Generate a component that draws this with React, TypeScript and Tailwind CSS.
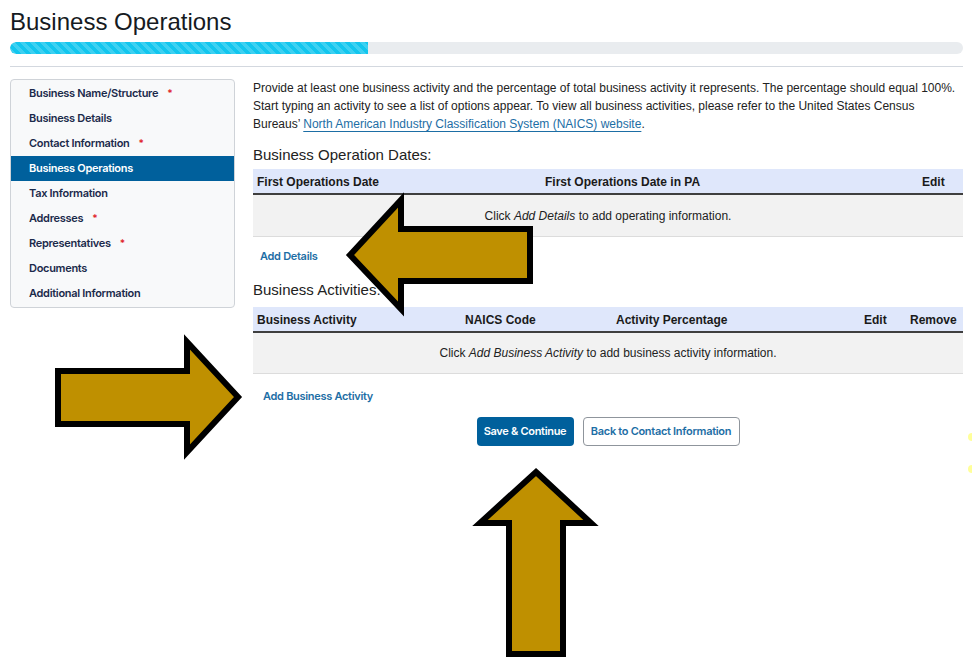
import React from 'react';

const navItems: { label: string; required?: boolean; active?: boolean }[] = [
  { label: 'Business Name/Structure', required: true },
  { label: 'Business Details' },
  { label: 'Contact Information', required: true },
  { label: 'Business Operations', active: true },
  { label: 'Tax Information' },
  { label: 'Addresses', required: true },
  { label: 'Representatives', required: true },
  { label: 'Documents' },
  { label: 'Additional Information' },
];

const Arrows = () => (
  <svg
    className="pointer-events-none absolute left-0 top-0 h-[657px] w-[972px]"
    viewBox="0 0 972 657"
    fill="#bf9000"
    stroke="#000"
    strokeWidth={6}
    strokeLinejoin="miter"
  >
    {/* left-pointing, next to Add Details */}
    <polygon points="350,255 401,200 401,229 530,229 530,281 401,281 401,309" />
    {/* right-pointing, toward Add Business Activity */}
    <polygon points="58,371 187,371 187,342 238,397 187,452 187,424 58,424" />
    {/* up, under Save & Continue */}
    <polygon points="536,472 591,523 563,523 563,654 509,654 509,523 480,523" />
  </svg>
);

export default function App() {
  return (
    <div className="relative h-[657px] w-[972px] overflow-hidden bg-white px-[10px] font-['Liberation_Sans',Arial,sans-serif] text-[#222]">
      <h1 className="pt-[8px] text-[24px] leading-[28px] text-[#151a22]">Business Operations</h1>

      <div className="mt-[6px] h-[12px] w-[953px] overflow-hidden rounded-full bg-[#e9ecef]">
        <div className="h-full w-[358px] rounded-l-full bg-[#12c6ee] bg-[linear-gradient(45deg,rgba(255,255,255,.18)_25%,transparent_25%,transparent_50%,rgba(255,255,255,.18)_50%,rgba(255,255,255,.18)_75%,transparent_75%,transparent)] bg-size-[10px_10px]" />
      </div>

      <div className="mt-[12px] h-px w-[953px] bg-[#d3d8df]" />

      <div className="mt-[12px] flex items-start">
        <nav className="w-[225px] shrink-0 rounded-[4px] border border-[#cfd3d8] bg-[#f8f9fa] py-px font-['Inter',sans-serif] text-[11px] font-semibold">
          {navItems.map((item) => (
            <div
              key={item.label}
              className={`flex h-[25px] items-center pl-[18px] tracking-[-0.3px] ${
                item.active ? 'bg-[#00609c] text-white' : 'text-[#1b2a4b]'
              }`}
            >
              {item.label}
              {item.required && <span className="ml-[9px] text-[10px] text-[#e0242b]">*</span>}
            </div>
          ))}
        </nav>

        <main className="ml-[18px] w-[710px]">
          <p className="text-[12px] leading-[18px]">
            Provide at least one business activity and the percentage of total business activity it represents. The
            percentage should equal 100%. Start typing an activity to see a list of options appear. To view all business
            activities, please refer to the United States Census Bureaus’{' '}
            <a className="text-[#1d6ea5] underline decoration-[#1d6ea5] underline-offset-[3px]">
              North American Industry Classification System (NAICS) website
            </a>
            .
          </p>

          <h2 className="mt-[12px] text-[15px] leading-[20px] text-[#222]">Business Operation Dates:</h2>

          <div className="mt-[4px] text-[12px]">
            <div className="grid h-[26px] grid-cols-[292px_377px_41px] items-center border-b-2 border-[#3f3f3f] bg-[#dfe7fb] pt-px font-bold text-[#1a1a1a]">
              <span className="pl-[4px]">First Operations Date</span>
              <span>First Operations Date in PA</span>
              <span>Edit</span>
            </div>
            <div className="flex h-[42px] items-center justify-center border-b border-[#dcdcdc] bg-[#f2f2f2]">
              <span>
                Click <em>Add Details</em> to add operating information.
              </span>
            </div>
          </div>

          <div className="ml-[7px] mt-[11px] font-['Inter',sans-serif] text-[11px] font-semibold leading-[16px] tracking-[-0.3px] text-[#1d6ea5]">
            Add Details
          </div>

          <h2 className="mt-[16px] text-[15px] leading-[20px] text-[#222]">Business Activities:</h2>

          <div className="mt-[7px] text-[12px]">
            <div className="grid h-[26px] grid-cols-[212px_151px_247px_46px_54px] items-center border-b-2 border-[#3f3f3f] bg-[#dfe7fb] pt-px font-bold text-[#1a1a1a]">
              <span className="pl-[4px]">Business Activity</span>
              <span>NAICS Code</span>
              <span>Activity Percentage</span>
              <span className="pl-px">Edit</span>
              <span className="pl-px">Remove</span>
            </div>
            <div className="flex h-[41px] items-center justify-center border-b border-[#dcdcdc] bg-[#f2f2f2]">
              <span>
                Click <em>Add Business Activity</em> to add business activity information.
              </span>
            </div>
          </div>

          <div className="ml-[10px] mt-[14px] font-['Inter',sans-serif] text-[11px] font-semibold leading-[16px] tracking-[-0.3px] text-[#1d6ea5]">
            Add Business Activity
          </div>

          <div className="mt-[13px] flex justify-center gap-[9px] font-['Inter',sans-serif] text-[11px] font-semibold tracking-[-0.3px]">
            <button className="h-[29px] w-[97px] rounded-[4px] bg-[#00609c] text-white">Save &amp; Continue</button>
            <button className="h-[29px] w-[157px] rounded-[4px] border border-[#8f959c] bg-white text-[#1d6ea5]">
              Back to Contact Information
            </button>
          </div>
        </main>
      </div>

      <Arrows />

      <span className="absolute left-[968px] top-[433px] h-[8px] w-[8px] rounded-full bg-[#ffff9a]" />
      <span className="absolute left-[968px] top-[465px] h-[8px] w-[8px] rounded-full bg-[#ffff9a]" />
    </div>
  );
}
